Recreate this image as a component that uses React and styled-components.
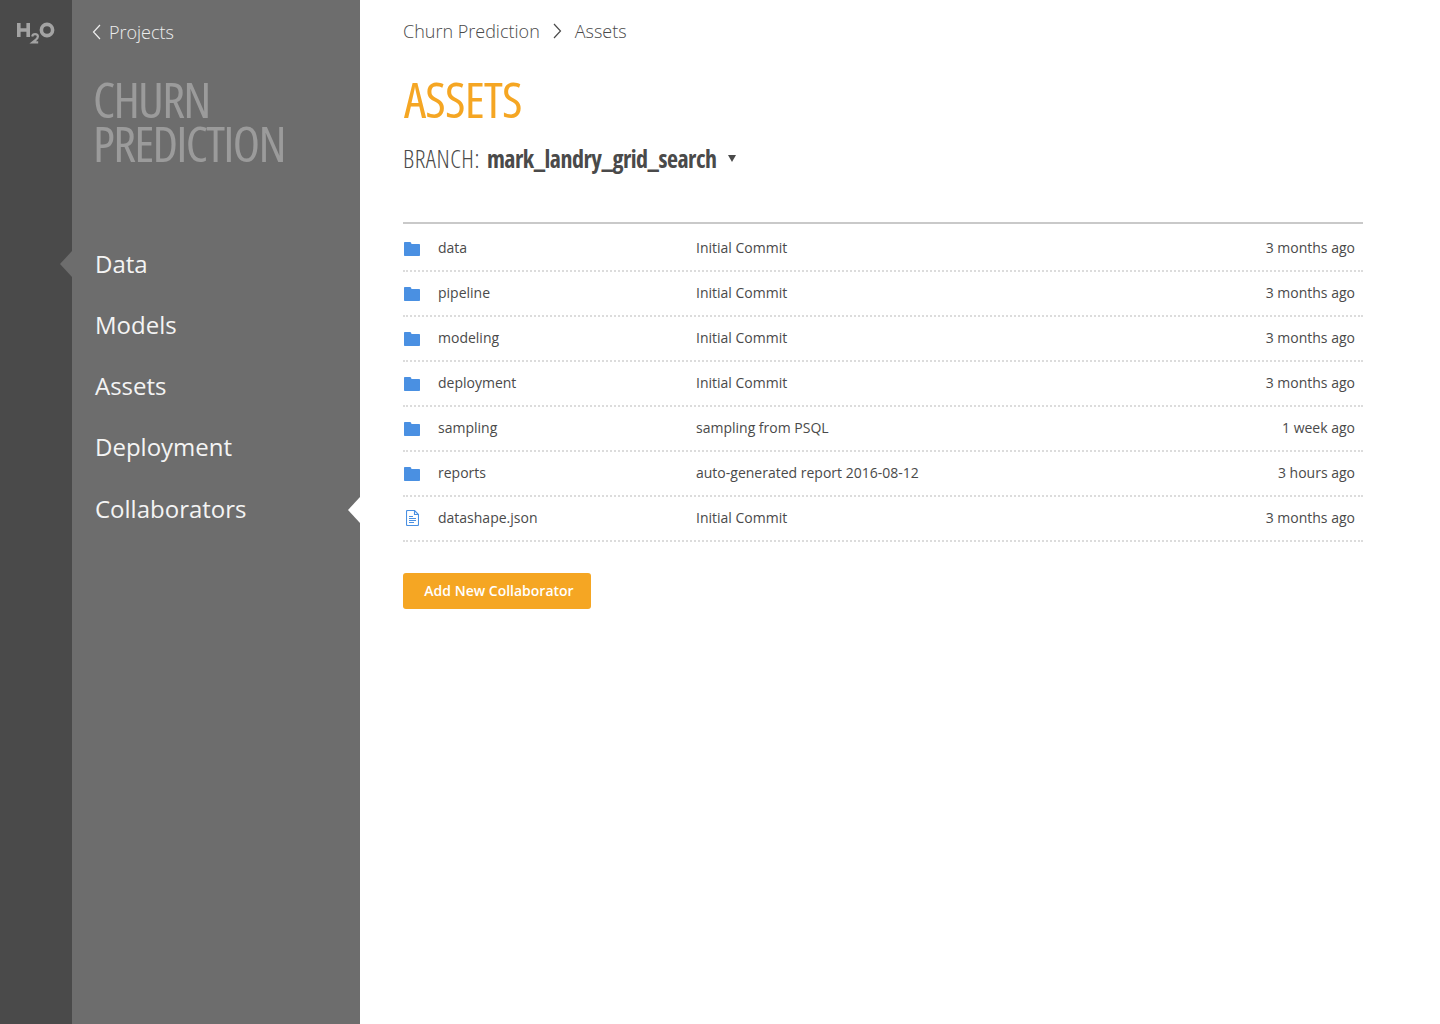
import React from "react";
import styled, { createGlobalStyle } from "styled-components";

const GlobalStyle = createGlobalStyle`
  html, body {
    margin: 0;
    padding: 0;
    background: #fff;
    font-family: "Open Sans", "Liberation Sans", sans-serif;
  }
`;

const Page = styled.div`
  display: flex;
  height: 1024px;
  width: 1440px;
  overflow: hidden;
`;

const Rail = styled.div`
  width: 72px;
  flex-shrink: 0;
  background: #4a4a4a;
  display: flex;
  justify-content: center;
  padding-top: 20px;
  box-sizing: border-box;
`;

const Sidebar = styled.aside`
  width: 288px;
  flex-shrink: 0;
  background: #6d6d6d;
  position: relative;
  box-sizing: border-box;
  padding: 19px 0 0 20px;
`;

const BackLink = styled.div`
  display: flex;
  align-items: center;
  gap: 8px;
  height: 26px;
  font-size: 18px;
  letter-spacing: -0.02px;
  font-weight: 300;
  color: #eee;
`;

const ProjectTitle = styled.h2`
  margin: 32px 0 0 1px;
  font-family: "Open Sans", sans-serif;
  font-stretch: 75%;
  font-weight: 500;
  font-size: 50px;
  line-height: 44px;
  letter-spacing: -1.7px;
  color: #9b9b9b;
  text-transform: uppercase;
  white-space: nowrap;
`;

const Nav = styled.nav`
  display: flex;
  flex-direction: column;
  margin: 81px 0 0 3px;
  gap: 25.15px;
`;

const NavItem = styled.div`
  font-size: 24px;
  line-height: 36px;
  color: #f4f4f4;
`;

const Notch = styled.div`
  position: absolute;
  width: 0;
  height: 0;
  border-top: 13px solid transparent;
  border-bottom: 13px solid transparent;
  border-right: 12px solid ${(p) => p.$color};
  top: ${(p) => p.$top}px;
  left: ${(p) => p.$left}px;
`;

const Main = styled.main`
  flex: 1;
  padding: 17px 77px 0 43px;
  box-sizing: border-box;
`;

const Breadcrumb = styled.div`
  display: flex;
  align-items: center;
  height: 28px;
  font-size: 18px;
  font-weight: 300;
  color: #4a4a4a;
  gap: 13px;
`;

const Heading = styled.h1`
  margin: 28px 0 0 1px;
  font-family: "Open Sans", sans-serif;
  font-stretch: 75%;
  font-weight: 500;
  font-size: 50px;
  line-height: 52px;
  letter-spacing: -0.8px;
  color: #f5a623;
  text-transform: uppercase;
`;

const BranchRow = styled.div`
  display: flex;
  align-items: center;
  margin-top: 16px;
  height: 34px;
  font-family: "Open Sans", sans-serif;
  font-stretch: 75%;
  font-weight: 300;
  letter-spacing: 0.5px;
  color: #4a4a4a;
  font-size: 25px;
  white-space: nowrap;
`;

const BranchName = styled.span`
  font-weight: 700;
  font-size: 24px;
  letter-spacing: -0.5px;
  margin-left: 7px;
`;

const Caret = styled.span`
  margin-left: 11px;
  width: 0;
  height: 0;
  border-left: 4px solid transparent;
  border-right: 4px solid transparent;
  border-top: 7px solid #4a4a4a;
`;

const Table = styled.div`
  margin-top: 47px;
  border-top: 2px solid #c9c9c9;
  padding-top: 3px;
`;

const Row = styled.div`
  display: grid;
  grid-template-columns: 35px 258px 1fr auto;
  align-items: center;
  box-sizing: border-box;
  height: 45px;
  padding: 0 8px 2px 0;
  border-bottom: 2px dotted #dcdcdc;
  font-size: 14px;
  color: #4a4a4a;
`;

const IconCell = styled.div`
  display: flex;
  align-items: center;
  padding-left: ${(p) => p.$indent}px;
  padding-top: ${(p) => (p.$indent === 1 ? 2 : 0)}px;
`;

const AddButton = styled.button`
  display: block;
  margin-top: 31px;
  width: 188px;
  height: 36px;
  padding: 0 0 2px 4px;
  border: none;
  border-radius: 3px;
  background: #f5a623;
  color: #fff;
  font-family: inherit;
  font-size: 14px;
  font-weight: 600;
`;

function Logo() {
  return (
    <svg width="40" height="26" viewBox="0 0 40 26" fill="none" stroke="#a3a3a3">
      <path strokeWidth="3.600" d="M2.800 3v14M12.200 3v14M2.800 10h9.400" />
      <path strokeWidth="2.200" d="M16.200 16.500c.3-1.500 1.400-2.300 2.900-2.300 1.600 0 2.800 1 2.800 2.400 0 1.200-.7 2-1.900 3l-3.400 2.700h5.600" />
      <circle cx="31" cy="10" r="5.600" strokeWidth="3.600" />
    </svg>
  );
}

function Folder() {
  return (
    <svg width="16" height="14" viewBox="0 0 16 14">
      <path
        fill="#4a90e2"
        d="M1 0h5c.5 0 .8.2 1 .6L7.500 2H15c.6 0 1 .4 1 1v10c0 .6-.4 1-1 1H1c-.6 0-1-.4-1-1V1c0-.6.4-1 1-1z"
      />
    </svg>
  );
}

function Doc() {
  return (
    <svg width="13" height="16" viewBox="0 0 13 16" fill="none" stroke="#4a90e2" strokeWidth="1.100">
      <path d="M1.500.5h7l4 4v10c0 .6-.4 1-1 1h-10c-.6 0-1-.4-1-1v-13c0-.6.4-1 1-1z" />
      <path d="M8.500.5v4h4M3 6.500h4M3 8.500h7M3 10.500h7M3 12.500h5" />
    </svg>
  );
}

function Chevron({ left }) {
  return (
    <svg width="9" height="16" viewBox="0 0 9 16" fill="none" stroke={left ? "#eee" : "#4a4a4a"} strokeWidth="1.200">
      <path d={left ? "M8 1 1.500 8 8 15" : "M1 1l6.500 7L1 15"} />
    </svg>
  );
}

const rows = [
  ["data", "Initial Commit", "3 months ago"],
  ["pipeline", "Initial Commit", "3 months ago"],
  ["modeling", "Initial Commit", "3 months ago"],
  ["deployment", "Initial Commit", "3 months ago"],
  ["sampling", "sampling from PSQL", "1 week ago"],
  ["reports", "auto-generated report 2016-08-12", "3 hours ago"],
  ["datashape.json", "Initial Commit", "3 months ago", true],
];

export default function App() {
  return (
    <Page>
      <GlobalStyle />
      <Rail>
        <Logo />
      </Rail>
      <Sidebar>
        <BackLink>
          <Chevron left />
          Projects
        </BackLink>
        <ProjectTitle>
          Churn
          <br />
          Prediction
        </ProjectTitle>
        <Nav>
          <NavItem>Data</NavItem>
          <NavItem>Models</NavItem>
          <NavItem>Assets</NavItem>
          <NavItem>Deployment</NavItem>
          <NavItem>Collaborators</NavItem>
        </Nav>
        <Notch $color="#6d6d6d" $top={251} $left={-12} />
        <Notch $color="#fff" $top={497} $left={276} />
      </Sidebar>
      <Main>
        <Breadcrumb>
          <span>Churn Prediction</span>
          <Chevron />
          <span>Assets</span>
        </Breadcrumb>
        <Heading>Assets</Heading>
        <BranchRow>
          BRANCH:
          <BranchName>mark_landry_grid_search</BranchName>
          <Caret />
        </BranchRow>
        <Table>
          {rows.map(([name, msg, time, isFile]) => (
            <Row key={name}>
              <IconCell $indent={isFile ? 3 : 1}>{isFile ? <Doc /> : <Folder />}</IconCell>
              <span>{name}</span>
              <span>{msg}</span>
              <span>{time}</span>
            </Row>
          ))}
        </Table>
        <AddButton>Add New Collaborator</AddButton>
      </Main>
    </Page>
  );
}
